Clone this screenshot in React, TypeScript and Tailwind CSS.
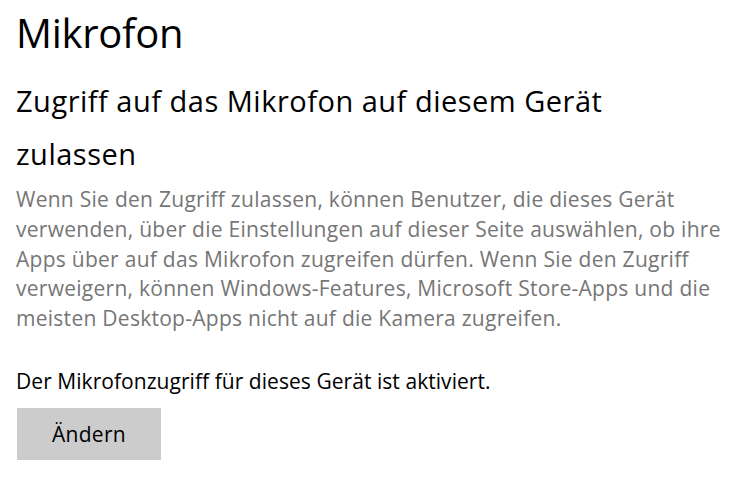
export default function App() {
  const font = { fontFamily: '"Open Sans", "Noto Sans", sans-serif' };
  return (
    <div className="w-[754px] h-[482px] bg-white overflow-hidden" style={font}>
      <div className="pl-[16px] pt-[7px]">
        <h1 className="text-[40px] leading-[52px] text-black font-normal tracking-[-0.3px]">Mikrofon</h1>
        <h2 className="mt-[15.25px] text-[29px] leading-[53px] text-black font-normal whitespace-nowrap tracking-[0.5px]">
          Zugriff auf das Mikrofon auf diesem Gerät
          <br />
          zulassen
        </h2>
        <p className="mt-[5px] text-[21px] leading-[29.7px] text-[#767676] whitespace-nowrap tracking-[0.27px]">
          Wenn Sie den Zugriff zulassen, können Benutzer, die dieses Gerät
          <br />
          verwenden, über die Einstellungen auf dieser Seite auswählen, ob ihre
          <br />
          Apps über auf das Mikrofon zugreifen dürfen. Wenn Sie den Zugriff
          <br />
          verweigern, können Windows-Features, Microsoft Store-Apps und die
          <br />
          meisten Desktop-Apps nicht auf die Kamera zugreifen.
        </p>
        <p className="mt-[33.5px] text-[21px] leading-[29.7px] text-black whitespace-nowrap tracking-[0.05px]">
          Der Mikrofonzugriff für dieses Gerät ist aktiviert.
        </p>
        <button className="block mt-[11.3px] ml-[1px] w-[144px] h-[52px] bg-[#cccccc] text-black text-[21px] tracking-[0.3px]">
          Ändern
        </button>
      </div>
    </div>
  );
}
